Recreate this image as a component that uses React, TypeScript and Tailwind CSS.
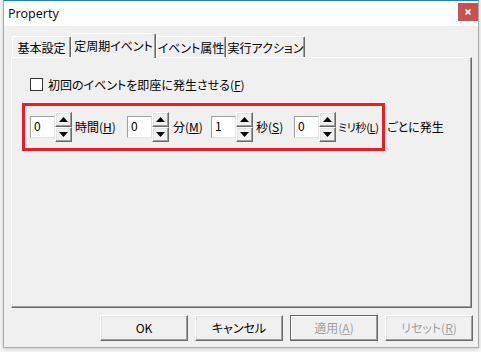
import React from 'react';

// 3D枠の共通スタイル
const raised =
  'border border-t-white border-l-white border-r-[#696969] border-b-[#696969] shadow-[inset_-1px_-1px_#a0a0a0,inset_1px_1px_#e3e3e3]';

function Arrow({ up }: { up?: boolean }) {
  return (
    <svg width="9" height="5" viewBox="0 0 9 5">
      <polygon points={up ? '0,5 4.5,0 9,5' : '0,0 4.5,5 9,0'} fill="#000" />
    </svg>
  );
}

function SpinBox({ value }: { value: string }) {
  return (
    <div className="flex items-center shrink-0">
      <div className="w-[25px] h-[22px] bg-white border border-t-[#a0a0a0] border-l-[#a0a0a0] border-r-[#e3e3e3] border-b-[#e3e3e3] pl-[3px] pt-[1px] leading-[16px]">
        {value}
      </div>
      <div className="flex flex-col w-[17px]">
        <div className={`h-[15px] bg-[#f0f0f0] flex items-center justify-center ${raised}`}>
          <Arrow up />
        </div>
        <div className={`h-[15px] bg-[#f0f0f0] flex items-center justify-center ${raised}`}>
          <Arrow />
        </div>
      </div>
    </div>
  );
}

const tabs = [
  { label: '基本設定', w: 'w-[59px]' },
  { label: '定周期イベント', w: 'w-[85px]', active: true },
  { label: 'イベント属性', w: 'w-[70px]' },
  { label: '実行アクション', w: 'w-[79px]' },
];

export default function App() {
  return (
    <div className="w-[481px] h-[352px] bg-[#f7f7f7] pl-[3px] font-['Noto_Sans_CJK_JP',sans-serif] [font-feature-settings:'palt'] text-[12px] leading-[16px] text-black">
      <div className="w-[476px] flex flex-col border-t border-t-[#1883d7] border-x border-b border-x-[#aaaaaa] border-b-[#aaaaaa] shadow-[0_1px_4px_rgba(0,0,0,0.2)]">
        {/* タイトルバー */}
        <div className="h-[25px] bg-white flex items-start">
          <div className="flex-1 pl-[4px] pt-[5px] font-['Noto_Sans',sans-serif] text-[12.5px] leading-[16px] text-[#111]">
            Property
          </div>
          <div className="w-[20px] h-[18px] mt-[2px] bg-[#c75050] flex items-center justify-center">
            <svg width="6" height="6" viewBox="0 0 6 6">
              <path d="M0.5 0.5 L5.5 5.5 M5.5 0.5 L0.5 5.5" stroke="#fff" strokeWidth="1.6" />
            </svg>
          </div>
        </div>

        {/* 本体 */}
        <div className="bg-[#f0f0f0] pt-[7px] pb-[6px] flex flex-col">
          <div className="h-[24px] flex items-end pl-[8px]">
            {tabs.map((t) =>
              t.active ? (
                <div
                  key={t.label}
                  className={`${t.w} h-[25px] shrink-0 self-start relative z-10 bg-[#f0f0f0] border-t border-l border-t-white border-l-white border-r border-r-[#696969] rounded-t-[2px] shadow-[inset_-1px_0_#a0a0a0] pt-[4px] text-center whitespace-nowrap`}
                >
                  {t.label}
                </div>
              ) : (
                <div
                  key={t.label}
                  className={`${t.w} h-[21px] shrink-0 bg-[#f0f0f0] border-t border-l border-t-white border-l-white border-r border-r-[#696969] rounded-t-[2px] shadow-[inset_-1px_0_#a0a0a0] pt-[3px] text-center whitespace-nowrap`}
                >
                  {t.label}
                </div>
              )
            )}
          </div>

          {/* タブパネル */}
          <div className="ml-[7px] w-[461px] h-[251px] border border-t-white border-l-white border-r-[#696969] border-b-[#696969] shadow-[inset_-1px_-1px_#a0a0a0] flex flex-col">
            <div className="mt-[20px] ml-[18px] flex items-center h-[13px]">
              <div className="w-[13px] h-[13px] bg-white border border-[#333333]" />
              <div className="ml-[5px] whitespace-nowrap">
                初回のイベントを即座に発生させる(<span className="underline">F</span>)
              </div>
            </div>

            <div className="mt-[12px] ml-[10px] flex items-center">
              <div className="w-[363px] h-[48px] shrink-0 border-[3px] border-[#ed1c24] flex items-center pl-[5px]">
                <SpinBox value="0" />
                <div className="w-[55px] shrink-0 pl-[3px] whitespace-nowrap">
                  時間(<span className="underline">H</span>)
                </div>
                <SpinBox value="0" />
                <div className="w-[42px] shrink-0 pl-[4px] whitespace-nowrap">
                  分(<span className="underline">M</span>)
                </div>
                <SpinBox value="1" />
                <div className="w-[41px] shrink-0 pl-[3px] whitespace-nowrap">
                  秒(<span className="underline">S</span>)
                </div>
                <SpinBox value="0" />
                <div className="shrink-0 pl-[2px] text-[11px] tracking-[-0.3px] whitespace-nowrap">
                  ミリ秒(<span className="underline">L</span>)
                </div>
              </div>
              <div className="ml-[2px] whitespace-nowrap">ごとに発生</div>
            </div>
          </div>

          {/* ボタン */}
          <div className="mt-[7px] flex justify-end gap-[7px] pr-[5px]">
            <div className={`w-[88px] h-[26px] bg-[#f0f0f0] flex items-center justify-center ${raised}`}>OK</div>
            <div className={`w-[88px] h-[26px] bg-[#f0f0f0] flex items-center justify-center ${raised}`}>キャンセル</div>
            <div className="w-[88px] h-[26px] bg-[#f0f0f0] flex items-center justify-center border border-[#646464] shadow-[inset_-1px_-1px_#a0a0a0,inset_1px_1px_#fff] text-[#a0a0a0]">
              適用(<span className="underline">A</span>)
            </div>
            <div className={`w-[88px] h-[26px] bg-[#f0f0f0] flex items-center justify-center text-[#a0a0a0] ${raised}`}>
              リセット(<span className="underline">R</span>)
            </div>
          </div>
        </div>
      </div>
    </div>
  );
}
